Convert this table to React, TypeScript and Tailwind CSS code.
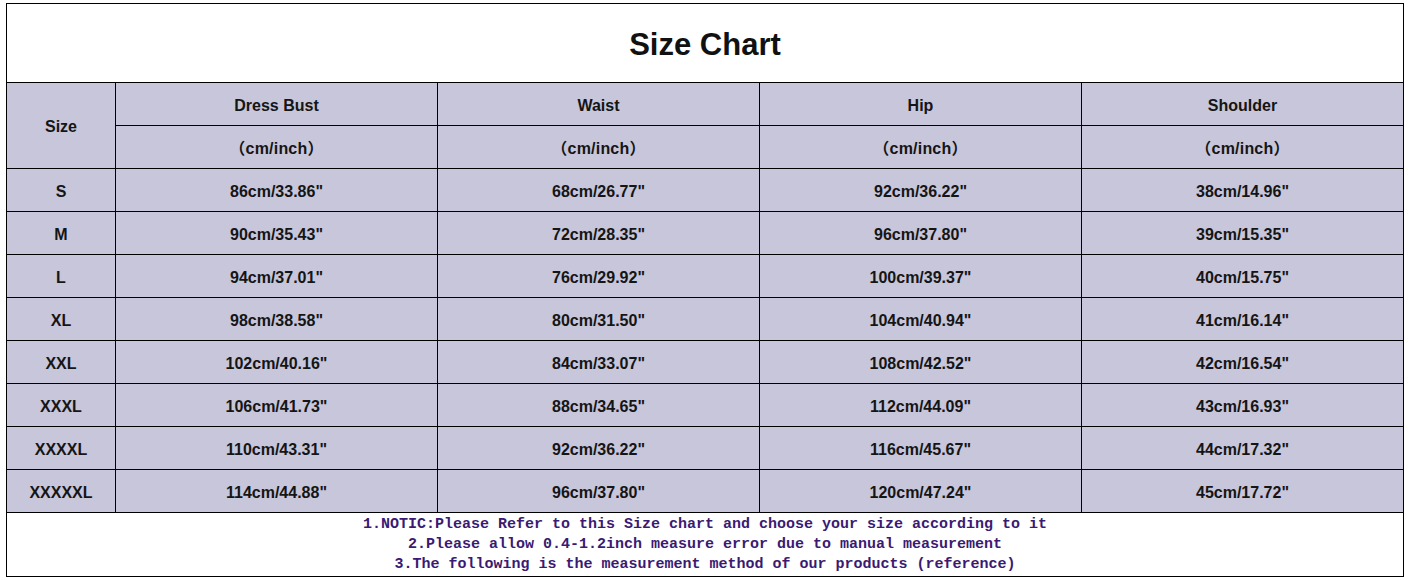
import React from "react";

const rows: string[][] = [
  ["S", "86cm/33.86\"", "68cm/26.77\"", "92cm/36.22\"", "38cm/14.96\""],
  ["M", "90cm/35.43\"", "72cm/28.35\"", "96cm/37.80\"", "39cm/15.35\""],
  ["L", "94cm/37.01\"", "76cm/29.92\"", "100cm/39.37\"", "40cm/15.75\""],
  ["XL", "98cm/38.58\"", "80cm/31.50\"", "104cm/40.94\"", "41cm/16.14\""],
  ["XXL", "102cm/40.16\"", "84cm/33.07\"", "108cm/42.52\"", "42cm/16.54\""],
  ["XXXL", "106cm/41.73\"", "88cm/34.65\"", "112cm/44.09\"", "43cm/16.93\""],
  ["XXXXL", "110cm/43.31\"", "92cm/36.22\"", "116cm/45.67\"", "44cm/17.32\""],
  ["XXXXXL", "114cm/44.88\"", "96cm/37.80\"", "120cm/47.24\"", "45cm/17.72\""],
];

const cell =
  "bg-[#c7c6da] flex items-center justify-center h-[42px] pt-[3px] text-[16px] font-bold text-[#151515]";

export default function App() {
  return (
    <div className="w-[1409px] h-[580px] bg-white pt-[3px] pl-[6px] font-['Liberation_Sans',Arial,sans-serif]">
      <div className="w-[1398px] border border-black">
        <div className="h-[79px] border-b border-black flex items-center justify-center pt-[5px]">
          <span className="text-[31px] font-bold text-[#111]">Size Chart</span>
        </div>
        <div className="grid grid-cols-[108px_321px_321px_321px_321px] gap-px bg-black">
          <div className={`${cell} row-span-2 h-auto`}>Size</div>
          <div className={cell}>Dress Bust</div>
          <div className={cell}>Waist</div>
          <div className={cell}>Hip</div>
          <div className={cell}>Shoulder</div>
          {[0, 1, 2, 3].map((i) => (
            <div key={i} className={`${cell} font-['Noto_Sans_CJK_SC',sans-serif] tracking-[0.2px]`}>
              <span className="font-['Liberation_Sans','Noto_Sans_CJK_SC',sans-serif]">（cm/inch）</span>
            </div>
          ))}
          {rows.map((r) =>
            r.map((v, j) => (
              <div key={r[0] + j} className={cell}>
                {v}
              </div>
            ))
          )}
        </div>
        <div className="h-[64px] border-t border-black pt-[2px] flex flex-col items-center font-['Liberation_Mono',monospace] font-bold text-[15px] leading-[20px] text-[#3a1a72]">
          <div>1.NOTIC:Please Refer to this Size chart and choose your size according to it</div>
          <div>2.Please allow 0.4-1.2inch measure error due to manual measurement</div>
          <div>3.The following is the measurement method of our products (reference)</div>
        </div>
      </div>
    </div>
  );
}
